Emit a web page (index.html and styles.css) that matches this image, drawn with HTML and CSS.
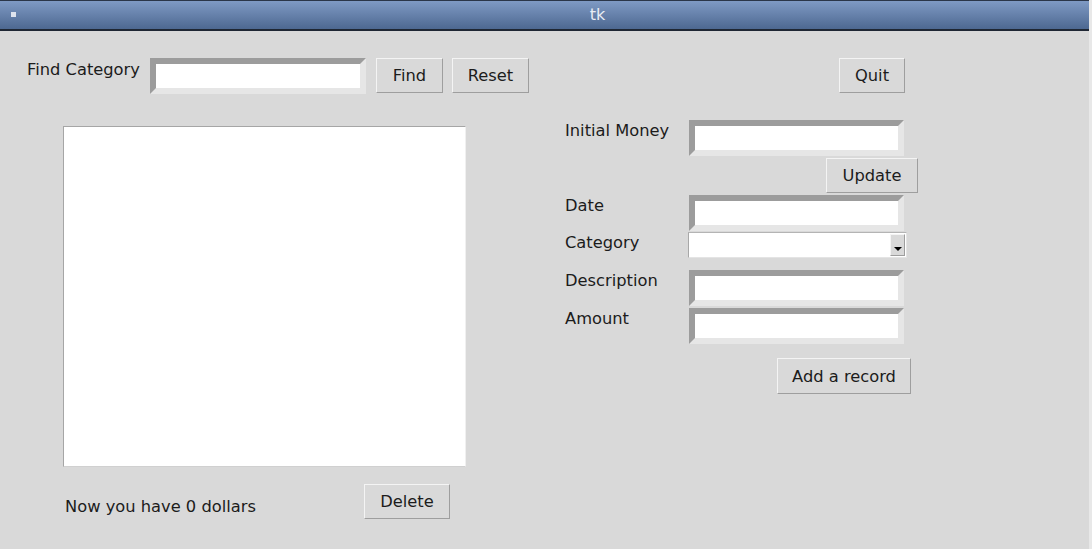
FILE: index.html
```
<!DOCTYPE html>
<html>
<head>
<meta charset="utf-8">
<title>tk</title>
<link rel="stylesheet" href="styles.css">
</head>
<body>
<div class="window">
  <div class="titlebar">
    <span class="menu-dot"></span>
    <span class="title">tk</span>
  </div>
  <div class="content">
    <div class="toprow">
      <span class="label find-label">Find Category</span>
      <div class="entry find-entry"></div>
      <button class="btn find-btn">Find</button>
      <button class="btn reset-btn">Reset</button>
      <button class="btn quit-btn">Quit</button>
    </div>
    <div class="main">
      <div class="leftcol">
        <div class="listbox"></div>
        <div class="bottomrow">
          <span class="label money-text">Now you have 0 dollars</span>
          <button class="btn delete-btn">Delete</button>
        </div>
      </div>
      <div class="form">
        <span class="label flabel">Initial Money</span>
        <div class="entry fentry"></div>
        <button class="btn update-btn">Update</button>
        <span class="label flabel r-date">Date</span>
        <div class="entry fentry r-date"></div>
        <span class="label flabel r-cat">Category</span>
        <div class="combo r-cat"><span class="combo-arrow"><span class="tri"></span></span></div>
        <span class="label flabel r-desc">Description</span>
        <div class="entry fentry r-desc"></div>
        <span class="label flabel r-amt">Amount</span>
        <div class="entry fentry r-amt"></div>
        <button class="btn add-btn">Add a record</button>
      </div>
    </div>
  </div>
</div>
</body>
</html>
```
FILE: styles.css
```
html, body {
  margin: 0;
  padding: 0;
}
body {
  background: #e8e8e8;
  font-family: "DejaVu Sans", "Liberation Sans", sans-serif;
  font-size: 16.3px;
  color: #1c1c1c;
  width: 1092px;
  height: 549px;
  overflow: hidden;
}
.window {
  width: 1089px;
  height: 549px;
  background: #d9d9d9;
}
.titlebar {
  height: 28px;
  border-top: 1px solid #2b3649;
  border-bottom: 2px solid #1f2734;
  background: linear-gradient(#7f9ac4, #4d6891);
  display: flex;
  align-items: center;
  justify-content: center;
  position: relative;
}
.menu-dot {
  position: absolute;
  left: 11px;
  top: 11px;
  width: 5px;
  height: 5px;
  background: #dfe4ee;
}
.title {
  color: #e8edf5;
  font-size: 16px;
  line-height: 18px;
  margin-left: 106px;
}
.content {
  padding-top: 27px;
}
.label {
  line-height: 18px;
  white-space: nowrap;
}
.entry {
  box-sizing: border-box;
  height: 36px;
  background: #ffffff;
  border: 6px solid;
  border-color: #9c9c9c #e6e6e6 #e6e6e6 #9c9c9c;
}
.btn {
  box-sizing: border-box;
  height: 35px;
  padding: 0;
  margin: 0;
  background: #d9d9d9;
  border: 1px solid;
  border-color: #f4f4f4 #9e9e9e #9e9e9e #f4f4f4;
  font-family: "DejaVu Sans", "Liberation Sans", sans-serif;
  font-size: 16.3px;
  color: #1c1c1c;
  text-align: center;
}
.toprow {
  display: flex;
  align-items: flex-start;
  height: 36px;
}
.find-label {
  margin-left: 27px;
  width: 123px;
  padding-top: 3px;
}
.find-entry {
  width: 216px;
}
.find-btn {
  margin-left: 10px;
  width: 67px;
}
.reset-btn {
  margin-left: 9px;
  width: 77px;
}
.quit-btn {
  margin-left: 310px;
  width: 66px;
}
.main {
  display: flex;
  align-items: flex-start;
  margin-top: 26px;
}
.leftcol {
  margin-left: 63px;
  width: 403px;
  padding-top: 6px;
}
.listbox {
  box-sizing: border-box;
  width: 403px;
  height: 341px;
  background: #ffffff;
  border: 1px solid;
  border-color: #a6a6a6 #f0f0f0 #d0d0d0 #a6a6a6;
}
.bottomrow {
  display: flex;
  align-items: flex-start;
  margin-top: 17px;
}
.money-text {
  margin-left: 2px;
  padding-top: 14px;
}
.delete-btn {
  margin-left: auto;
  margin-right: 16px;
  width: 86px;
}
.form {
  margin-left: 99px;
  display: grid;
  grid-template-columns: 124px 229px;
  align-items: start;
}
.flabel {
  grid-column: 1;
  padding-top: 2px;
}
.fentry {
  grid-column: 2;
  width: 215px;
}
.update-btn {
  grid-column: 2;
  justify-self: end;
  width: 92px;
  margin-top: 2px;
}
.r-date {
  margin-top: 2px;
}
.r-cat {
  margin-top: 1px;
}
.r-desc {
  margin-top: 12px;
}
.r-amt {
  margin-top: 2px;
}
.combo {
  grid-column: 2;
  box-sizing: border-box;
  width: 219px;
  height: 26px;
  margin-left: -1px;
  background: #ffffff;
  border: 1px solid;
  border-color: #b4b4b4 #e4e4e4 #e4e4e4 #a8a8a8;
  display: flex;
  justify-content: flex-end;
  padding: 1px;
}
.combo-arrow {
  box-sizing: border-box;
  width: 15px;
  height: 22px;
  background: #d9d9d9;
  border: 1px solid;
  border-color: #f4f4f4 #9e9e9e #9e9e9e #f4f4f4;
  display: flex;
  justify-content: center;
  align-items: flex-end;
  padding-bottom: 4px;
}
.tri {
  width: 0;
  height: 0;
  border-left: 4px solid transparent;
  border-right: 4px solid transparent;
  border-top: 4px solid #000000;
}
.add-btn {
  grid-column: 2;
  justify-self: end;
  width: 134px;
  height: 36px;
  margin-top: 14px;
  margin-right: 7px;
}
```
